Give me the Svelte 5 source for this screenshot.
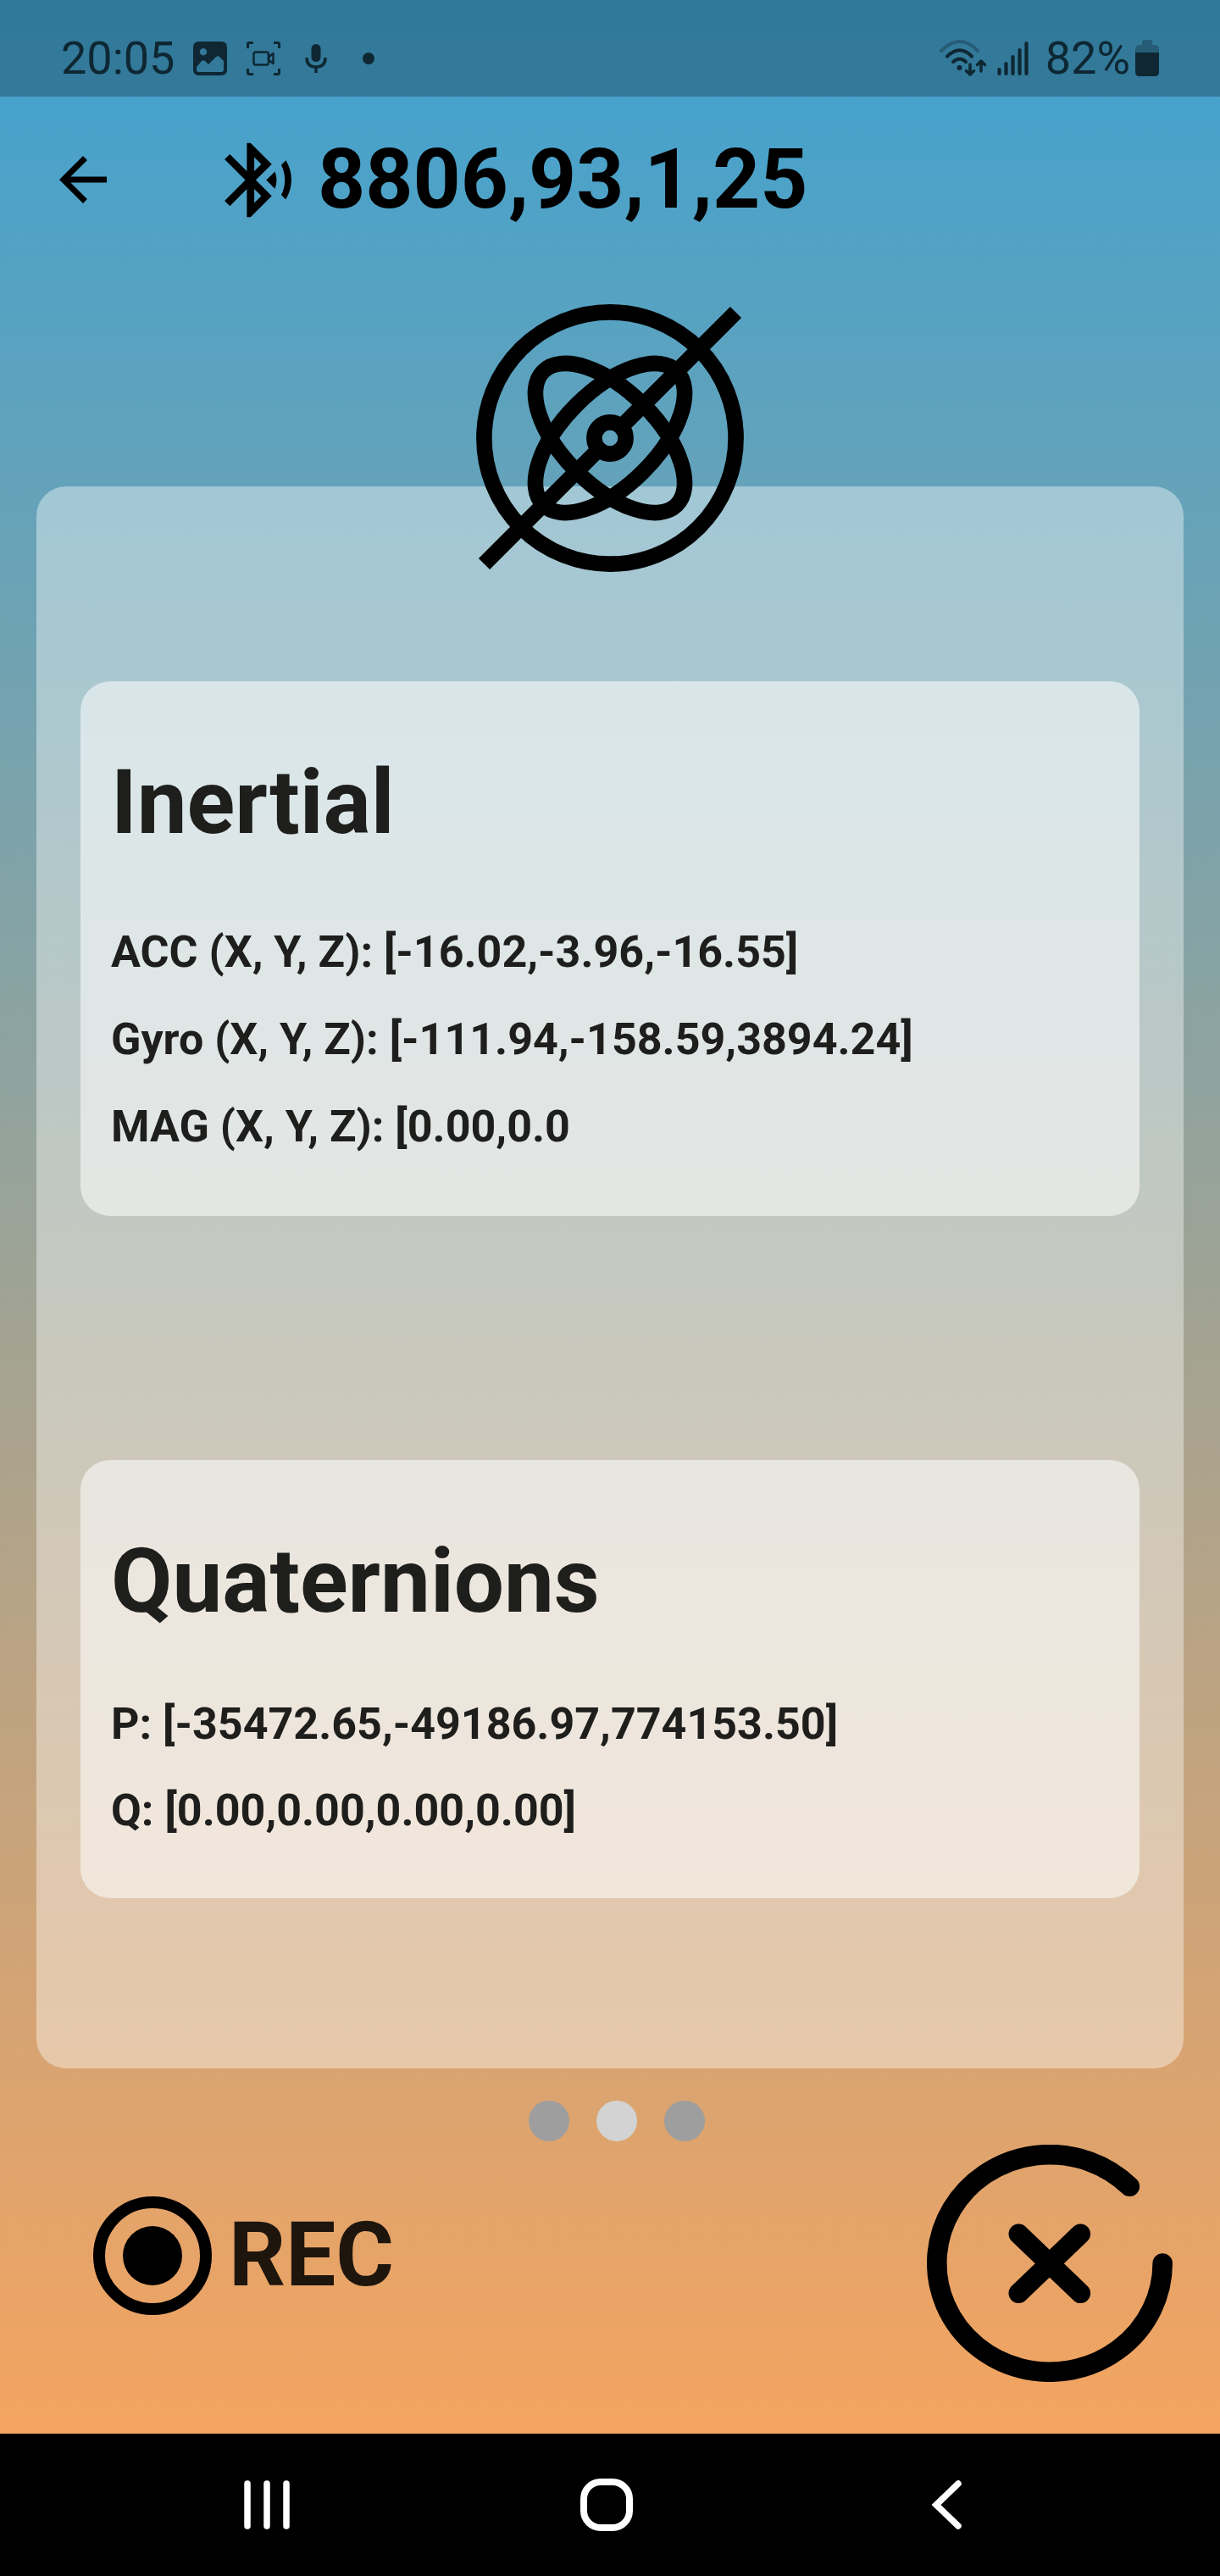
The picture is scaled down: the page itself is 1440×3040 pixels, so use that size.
<script>
  const groups = [
    {
      id: 'inertial',
      title: 'Inertial',
      rows: [
        'ACC (X, Y, Z): [-16.02,-3.96,-16.55]',
        'Gyro (X, Y, Z): [-111.94,-158.59,3894.24]',
        'MAG (X, Y, Z): [0.00,0.0',
      ],
    },
    {
      id: 'quaternions',
      title: 'Quaternions',
      rows: [
        'P: [-35472.65,-49186.97,774153.50]',
        'Q: [0.00,0.00,0.00,0.00]',
      ],
    },
  ];
  const pages = [1, 2, 3];
  let current = $state(2);
</script>

<div class="screen">
  <div class="app">
    <div class="status">
      <div class="status-left">
        <span class="clock">20:05</span>
        <svg class="picture" width="40" height="40" viewBox="0 0 40 40" aria-hidden="true">
          <path fill="currentColor" fill-rule="evenodd" d="M7 0H33Q40 0 40 7V33Q40 40 33 40H7Q0 40 0 33V7Q0 0 7 0ZM12 8a4.200 4.200 0 1 0 .01 0ZM4 30V33Q4 36 7 36H33Q36 36 36 33V23L31 18Q29 16.500 27 18L18 27L14 23Q12 21.500 10 23Z" />
        </svg>
        <svg class="scan" width="40" height="40" viewBox="0 0 40 40" fill="none" stroke="currentColor" aria-hidden="true">
          <path stroke-width="3" d="M1.500 8V3Q1.500 1.500 3 1.500H8M32 1.500H37Q38.500 1.500 38.500 3V8M38.500 32V37Q38.500 38.500 37 38.500H32M8 38.500H3Q1.500 38.500 1.500 37V32" />
          <rect x="8.500" y="12.500" width="17.500" height="15" rx="2.500" stroke-width="2.500" />
          <path stroke-width="2.500" stroke-linejoin="round" d="M26 18.500L31.500 14V26L26 21.500Z" />
        </svg>
        <svg class="mic" width="26" height="36" viewBox="0 0 26 36" fill="none" stroke="currentColor" aria-hidden="true">
          <rect x="7.500" y="1" width="11" height="21" rx="5.500" fill="currentColor" stroke="none" />
          <path stroke-width="3.500" d="M2 17Q2 28 13 28T24 17M13 28V35" />
        </svg>
        <span class="bullet"></span>
      </div>
      <div class="status-right">
        <svg width="56" height="44" viewBox="0 0 56 44" fill="none" stroke="currentColor" stroke-width="4" stroke-linecap="round" stroke-linejoin="round" aria-hidden="true">
          <path opacity="0.350" d="M2 13Q24 -9 45 13" />
          <path d="M9 19.500Q24 5 38 19.500M16 26Q24 19 31 26" />
          <circle cx="23.500" cy="33" r="3" fill="currentColor" stroke="none" />
          <path stroke-width="3.500" d="M36 29V41M31.500 36.500L36 41L40.500 36.500M49 37V25M44.500 29.500L49 25L53.500 29.500" />
        </svg>
        <svg class="bars" width="37" height="42" viewBox="0 0 37 42" stroke="currentColor" stroke-width="4.200" stroke-linecap="round" aria-hidden="true">
          <path d="M2.500 34V39M10.500 27V39M18.500 19V39M26.500 11V39M34.500 3V39" />
        </svg>
        <span class="clock">82%</span>
        <svg class="battery" width="28" height="44" viewBox="0 0 28 44" fill="currentColor" aria-hidden="true">
          <path opacity="0.350" d="M0 15V11Q0 6 5 6H8V2Q8 0 10 0H18Q20 0 20 2V6H23Q28 6 28 11V15Z" />
          <path d="M0 15H28V38Q28 43 23 43H5Q0 43 0 38Z" />
        </svg>
      </div>
    </div>

    <header>
      <button class="back" aria-label="Back">
        <svg width="84" height="84" viewBox="0 0 24 24"><path d="M20 11H7.830l5.590-5.590L12 4l-8 8 8 8 1.410-1.410L7.830 13H20v-2z" /></svg>
      </button>
      <svg width="105" height="105" viewBox="0 0 24 24" aria-hidden="true">
        <path d="M14.240 12.010l2.320 2.320c.28-.72.44-1.510.44-2.330 0-.82-.16-1.590-.43-2.310l-2.330 2.320zm5.290-5.300l-1.260 1.260c.63 1.210.98 2.570.98 4.020s-.36 2.820-.98 4.020l1.200 1.200c.97-1.540 1.540-3.360 1.540-5.310-.01-1.890-.55-3.670-1.480-5.190zm-3.820 1L10 2H9v7.590L4.410 5 3 6.410 8.590 12 3 17.590 4.410 19 9 14.410V22h1l5.710-5.710-4.300-4.290 4.300-4.290zM11 5.830l1.880 1.880L11 9.590V5.830zm1.880 10.460L11 18.170v-3.760l1.880 1.880z" />
      </svg>
      <h1>8806,93,1,25</h1>
    </header>

    <main>
      <svg class="emblem" width="320" height="320" viewBox="0 0 320 320" fill="none" stroke="#000" stroke-width="18.600" aria-hidden="true">
        <circle cx="160" cy="160" r="148.600" />
        <ellipse cx="160" cy="160" rx="111.400" ry="55.700" transform="rotate(45 160 160)" />
        <ellipse cx="160" cy="160" rx="111.400" ry="55.700" transform="rotate(-45 160 160)" />
        <circle cx="160" cy="160" r="18.600" />
        <path d="M11.500 308.500L146 174M174 146L308.500 11.500" />
      </svg>

      <section class="panel">
        {#each groups as group (group.id)}
          <article class="card {group.id}">
            <h2>{group.title}</h2>
            {#each group.rows as row}
              <p>{row}</p>
            {/each}
          </article>
        {/each}
      </section>

      <div class="dots">
        {#each pages as page}
          <button class:active={page === current} aria-label="Page {page}" onclick={() => (current = page)}></button>
        {/each}
      </div>
    </main>

    <footer>
      <button class="rec">
        <svg width="140" height="140" viewBox="0 0 20 20" aria-hidden="true">
          <circle cx="10" cy="10" r="9" fill="none" stroke="#000" stroke-width="2" />
          <circle cx="10" cy="10" r="5" />
        </svg>
        <span>REC</span>
      </button>
      <button class="stop" aria-label="Close">
        <svg width="290" height="280" viewBox="0 0 290 280" fill="none" stroke="#000" stroke-width="23.600" stroke-linecap="round">
          <path d="M239.300 49.300A133.200 128.300 0 1 0 278.200 140M108.300 105.300L181.300 175.300M181.300 105.300L108.300 175.300" />
        </svg>
      </button>
    </footer>
  </div>

  <nav>
    <button aria-label="Recent apps">
      <svg width="60" height="64" viewBox="0 0 60 64" fill="none" stroke="#fff" stroke-width="7.500" stroke-linecap="round"><path d="M7 7V57M30 7V57M53 7V57" /></svg>
    </button>
    <button aria-label="Home">
      <svg width="64" height="64" viewBox="0 0 64 64" fill="none" stroke="#fff" stroke-width="8"><rect x="5" y="5" width="54" height="54" rx="20" /></svg>
    </button>
    <button aria-label="Go back">
      <svg width="40" height="64" viewBox="0 0 40 64" fill="none" stroke="#fff" stroke-width="7.500" stroke-linecap="round"><path d="M34 7L8 32L34 57" /></svg>
    </button>
  </nav>
</div>

<style>
  :global(body) {
    margin: 0;
    background: #000;
  }
  .screen {
    display: flex;
    flex-direction: column;
    min-height: 100vh;
    font-family: Roboto, 'Liberation Sans', sans-serif;
    color: #000;
  }
  button {
    display: flex;
    align-items: center;
    padding: 0;
    border: 0;
    background: none;
    font: inherit;
    color: inherit;
    cursor: pointer;
  }
  svg {
    display: block;
    flex: none;
  }
  h1,
  h2,
  p {
    margin: 0;
  }
  .app {
    flex: 1;
    display: flex;
    flex-direction: column;
    background: linear-gradient(#40a2d0, #f4a460);
  }
  .status {
    display: flex;
    justify-content: space-between;
    align-items: center;
    height: 114px;
    padding: 24px 72px 0;
    box-sizing: border-box;
    background: rgba(0, 0, 0, 0.25);
    color: #0e2733;
  }
  .status-left,
  .status-right {
    display: flex;
    align-items: center;
  }
  .clock {
    font-size: 54px;
    line-height: 64px;
  }
  .picture {
    margin-left: 22px;
  }
  .scan {
    margin-left: 23px;
  }
  .mic {
    margin-left: 29px;
  }
  .bullet {
    width: 14px;
    height: 14px;
    margin-left: 42px;
    border-radius: 50%;
    background: currentColor;
  }
  .bars {
    margin: 0 20px 0 12px;
  }
  .battery {
    margin-left: 6px;
  }
  header {
    display: flex;
    align-items: center;
    height: 196px;
    padding: 0 56px;
  }
  .back {
    margin-right: 112px;
  }
  h1 {
    margin-left: 18px;
    font-size: 98px;
    line-height: 116px;
    font-weight: 700;
  }
  main {
    display: flex;
    flex-direction: column;
    padding: 47px 43px 0;
  }
  .emblem {
    position: relative;
    z-index: 1;
    align-self: center;
    margin-bottom: -103px;
  }
  .panel {
    display: flex;
    flex-direction: column;
    gap: 288px;
    padding: 230px 52px 201px;
    border-radius: 35px;
    background: rgba(255, 255, 255, 0.4);
  }
  .card {
    padding: 82px 36px 54px;
    border-radius: 35px;
    background: rgba(255, 255, 255, 0.55);
    color: #1e1e1c;
  }
  h2 {
    margin-bottom: 62px;
    font-size: 105px;
    line-height: 124px;
    font-weight: 700;
  }
  p {
    font-size: 52px;
    line-height: 103px;
    font-weight: 700;
  }
  .quaternions {
    padding-bottom: 52px;
  }
  .quaternions h2 {
    margin-bottom: 55px;
  }
  .quaternions p {
    line-height: 102px;
  }
  .dots {
    display: flex;
    justify-content: center;
    gap: 32px;
    padding: 38px 0 0 16px;
  }
  .dots button {
    width: 48px;
    height: 48px;
    border-radius: 50%;
    background: #9e9e9e;
  }
  .dots .active {
    background: #d3d3d3;
  }
  footer {
    display: flex;
    justify-content: space-between;
    align-items: center;
    padding: 4px 56px 61px 110px;
  }
  .rec {
    gap: 20px;
    margin-bottom: 18px;
    font-size: 105px;
    line-height: 124px;
    font-weight: 700;
  }
  .rec span {
    color: rgba(0, 0, 0, 0.87);
  }
  nav {
    display: flex;
    justify-content: center;
    height: 168px;
    padding-right: 8px;
    background: #000;
  }
  nav button {
    width: 28%;
    justify-content: center;
  }
</style>
